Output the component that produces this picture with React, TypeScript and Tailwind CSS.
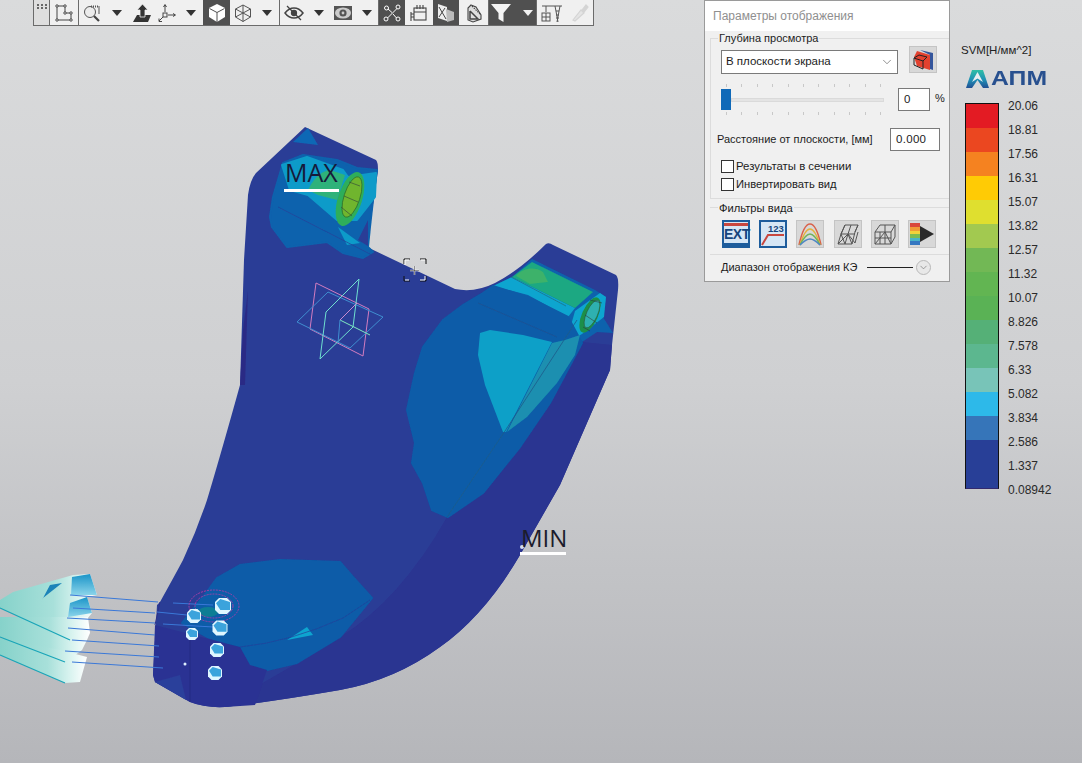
import React from "react";
import { ChevronDown } from "lucide-react";

const bands = [
  "#e31b23",
  "#eb4720",
  "#f58220",
  "#ffcb05",
  "#dfdf2f",
  "#a2c950",
  "#72b855",
  "#62b552",
  "#5ab255",
  "#55b077",
  "#5cb78f",
  "#78c4b8",
  "#2db9e9",
  "#3675b9",
  "#283f97",
  "#283f97",
];

const labels = [
  "20.06",
  "18.81",
  "17.56",
  "16.31",
  "15.07",
  "13.82",
  "12.57",
  "11.32",
  "10.07",
  "8.826",
  "7.578",
  "6.33",
  "5.082",
  "3.834",
  "2.586",
  "1.337",
  "0.08942",
];

const ticks = [0, 1, 2, 3, 4, 5, 6, 7, 8, 9, 10];

function Divider() {
  return <div className="w-px h-[25px] bg-[#6b6b6b] shrink-0" />;
}

function Arrow({ light }: { light?: boolean }) {
  return (
    <svg width="10" height="6" viewBox="0 0 10 6">
      <path d="M0 0H10L5 6Z" fill={light ? "#f2f2f2" : "#333"} />
    </svg>
  );
}

function Tool({ children, dark, w }: { children: React.ReactNode; dark?: boolean; w: number }) {
  return (
    <div
      className={`h-[25px] shrink-0 flex items-center justify-center ${dark ? "bg-[#505050]" : ""}`}
      style={{ width: w }}
    >
      {children}
    </div>
  );
}

function Toolbar() {
  return (
    <div className="absolute left-[33px] top-0 w-[561px] h-[26px] flex bg-[#f0f0f0] border border-t-0 border-[#6b6b6b]">
      <div className="w-[15px] h-[25px] bg-[#dedede] flex flex-col gap-px pt-1 items-center">
        <div className="w-[10px] h-[2px] border-t-2 border-dotted border-[#666]" />
        <div className="w-[10px] h-[2px] border-t-2 border-dotted border-[#666]" />
      </div>
      <Divider />
      <Tool w={28}>
        <svg width="18" height="18" viewBox="0 0 18 18" fill="none" stroke="#444" strokeWidth="1">
          <path d="M2 2H10V9H16V16H2Z" />
          <circle cx="2" cy="2" r="1.2" fill="#fff" />
          <circle cx="10" cy="2" r="1.2" fill="#fff" />
          <circle cx="10" cy="9" r="1.2" fill="#fff" />
          <circle cx="16" cy="9" r="1.2" fill="#fff" />
          <circle cx="16" cy="16" r="1.2" fill="#fff" />
          <circle cx="2" cy="16" r="1.2" fill="#fff" />
        </svg>
      </Tool>
      <Divider />
      <Tool w={26}>
        <svg width="18" height="18" viewBox="0 0 18 18" fill="none" stroke="#555" strokeWidth="1">
          <circle cx="7" cy="8" r="5.5" fill="#ececec" />
          <path d="M11 12L16 17" strokeWidth="2.2" stroke="#444" />
          <path d="M8 2.5H16V10" strokeDasharray="1 1" strokeWidth="2" />
        </svg>
      </Tool>
      <Tool w={24}><Arrow /></Tool>
      <Tool w={26}>
        <svg width="20" height="20" viewBox="0 0 20 20">
          <path d="M5 12H19L16 19H1Z" fill="#333" />
          <path d="M10.5 1L16 7H13V14H8V7H5Z" fill="#333" stroke="#f0f0f0" strokeWidth="0.8" />
        </svg>
      </Tool>
      <Tool w={24}>
        <svg width="20" height="20" viewBox="0 0 20 20" fill="none" stroke="#444" strokeWidth="1">
          <path d="M8 9V2M6.5 4L8 1.5L9.5 4" />
          <path d="M11 12H18M16 10.5L18.5 12L16 13.5" />
          <path d="M6 14L2 18M2 15.5V18.5H5" />
          <rect x="6" y="10" width="4" height="4" />
        </svg>
      </Tool>
      <Tool w={24}><Arrow /></Tool>
      <Tool dark w={27}>
        <svg width="20" height="20" viewBox="0 0 20 20">
          <path d="M10 1L18 5V14L10 19L2 14V5Z" fill="#fff" />
          <path d="M2.5 5.5L10 9.5L17.5 5.5M10 9.5V19" stroke="#505050" fill="none" strokeWidth="1" />
        </svg>
      </Tool>
      <Tool w={25}>
        <svg width="20" height="20" viewBox="0 0 20 20" fill="none" stroke="#555" strokeWidth="1">
          <path d="M10 2L17.5 6V14L10 18.5L2.5 14V6Z" />
          <path d="M2.5 6L10 10L17.5 6M10 10V18.5M2.5 14L10 10L17.5 14M10 2V10" />
        </svg>
      </Tool>
      <Tool w={24}><Arrow /></Tool>
      <Divider />
      <Tool w={27}>
        <svg width="20" height="18" viewBox="0 0 20 18" fill="none" stroke="#444" strokeWidth="1.5">
          <path d="M1 9C4 5 7 4 10 4S16 5 19 9C16 13 13 14 10 14S4 13 1 9Z" />
          <circle cx="10" cy="9" r="2.4" fill="#444" />
          <path d="M3 2L17 16" strokeWidth="1.3" />
        </svg>
      </Tool>
      <Tool w={23}><Arrow /></Tool>
      <Tool w={25}>
        <svg width="20" height="18" viewBox="0 0 20 18">
          <path d="M1 2H19V16H1Z" fill="#555" />
          <ellipse cx="10" cy="9" rx="8" ry="5.5" fill="#ccc" />
          <circle cx="10" cy="9" r="3.6" fill="#555" />
          <circle cx="10" cy="9" r="1.4" fill="#ccc" />
        </svg>
      </Tool>
      <Tool w={23}><Arrow /></Tool>
      <Divider />
      <Tool dark w={26}>
        <svg width="20" height="20" viewBox="0 0 20 20" fill="none" stroke="#fff" strokeWidth="1">
          <path d="M5.5 15L15 5.5" />
          <path d="M6 6L10 9.5M11 11L14.5 15" />
          <circle cx="4.5" cy="5" r="2" />
          <circle cx="16" cy="4" r="2" />
          <circle cx="4" cy="16" r="2" />
          <circle cx="16" cy="16" r="2" />
        </svg>
      </Tool>
      <Tool w={28}>
        <svg width="20" height="20" viewBox="0 0 20 20" fill="none" stroke="#444" strokeWidth="1.1">
          <rect x="5" y="5" width="12" height="12" />
          <path d="M8 2V6M11 2V6M14 2V6M5 9H17" />
          <path d="M2 9V18M2 11H5M2 14H5" />
        </svg>
      </Tool>
      <Tool dark w={26}>
        <svg width="20" height="20" viewBox="0 0 20 20">
          <path d="M2 1L11 4V18L2 15Z" fill="#eee" />
          <path d="M10 6L18 9V17L11 19Z" fill="#bbb" />
          <path d="M3 4L10 16M3 14L9 5" stroke="#444" strokeWidth="1" />
        </svg>
      </Tool>
      <Tool w={29}>
        <svg width="20" height="20" viewBox="0 0 20 20" fill="none" stroke="#444" strokeWidth="1.1">
          <path d="M7 2L12 4L17 12L17 16L9 19L4 17V5Z" fill="#ddd" />
          <path d="M6 8V16H14L6 8" strokeWidth="1.5" />
          <path d="M8 3L16 11" strokeDasharray="1.5 1" />
        </svg>
      </Tool>
      <Divider />
      <Tool dark w={47}>
        <div className="flex items-center gap-[12px] -ml-px">
          <svg width="20" height="18" viewBox="0 0 20 18">
            <path d="M0 0H20L12.5 9V18L7.5 15V9Z" fill="#f4f4f4" />
          </svg>
          <Arrow light />
        </div>
      </Tool>
      <Divider />
      <Tool w={29}>
        <svg width="22" height="20" viewBox="0 0 22 20" fill="none" stroke="#555" strokeWidth="1">
          <path d="M1 3H21M14 3L17 19M19 3L16 19M15 8H18M15 12H18M15 15H18" />
          <path d="M5 3V9" />
          <rect x="1" y="10" width="8" height="8" />
          <path d="M1 14H9M5 10V18" />
        </svg>
      </Tool>
      <Tool w={27}>
        <svg width="20" height="20" viewBox="0 0 20 20" fill="#e4e4e4" stroke="#d4d4d4" strokeWidth="1.2">
          <path d="M3 17L11 7L14 10L5 18Z" />
          <path d="M12 7L16 2L18 4L14 9Z" fill="#d4d4d4" />
        </svg>
      </Tool>
    </div>
  );
}

function Legend() {
  return (
    <div className="absolute left-[960px] top-[43px] w-[122px] text-[#222]">
      <div className="text-[11.5px] leading-[14px] pl-px">SVM[Н/мм^2]</div>
      <div className="flex items-center gap-[2px] h-[18px] mt-[12px] ml-[6px]">
        <svg width="23" height="19" viewBox="0 0 23 19" className="shrink-0">
          <defs>
            <linearGradient id="logoGrad" x1="0" y1="0" x2="0" y2="1">
              <stop offset="0" stopColor="#2fbfa5" />
              <stop offset="0.55" stopColor="#1f8fb5" />
              <stop offset="1" stopColor="#214f93" />
            </linearGradient>
          </defs>
          <path d="M0 19L6 1H17L23 19H17L11.5 11L6 19Z" fill="url(#logoGrad)" />
          <path d="M11.5 3L17 13L11.5 9.5L6 13Z" fill="#e8eef0" />
        </svg>
        <span className="text-[21px] leading-[18px] font-bold text-[#28508f] scale-x-[1.18] origin-left">АПМ</span>
      </div>
      <div className="flex items-start mt-[16px] ml-[5px]">
        <div className="w-[34px] border border-[#111] border-b-[#322a6e] shrink-0">
          {bands.map((color, i) => (
            <div key={i} className="h-[24px]" style={{ background: color }} />
          ))}
        </div>
        <div className="ml-[9px] -mt-[9px] text-[12px] leading-[24px] text-[#2a2a2a]">
          {labels.map((label) => (
            <div key={label}>{label}</div>
          ))}
        </div>
      </div>
    </div>
  );
}

function FilterButton({ children, selected }: { children: React.ReactNode; selected?: boolean }) {
  return (
    <div className={`w-[28px] h-[28px] shrink-0 flex items-center justify-center ${selected ? "border-2 border-[#1d5c9c] bg-[#d6e6f5]" : "border border-[#c4c4c4] bg-[#d8d8d8]"}`}>
      {children}
    </div>
  );
}

function TickRow() {
  return (
    <div className="flex justify-between w-[155px] ml-[5px] h-[3px]">
      {ticks.map((t) => <div key={t} className="w-px h-[3px] bg-[#c8c8c8]" />)}
    </div>
  );
}

function Panel() {
  return (
    <div className="absolute left-[704px] top-0 w-[246px] h-[282px] bg-[#f0f0f0] border border-[#9a9a9a] text-[11px] text-[#1c1c1c]">
      <div className="h-[30px] bg-white pl-2 flex items-center text-[12px] text-[#8f8f8f]">Параметры отображения</div>

      <div className="relative ml-[5px] mt-[7px] h-[161px] border border-r-0 border-[#dcdcdc]">
        <span className="absolute left-[7px] -top-[8px] bg-[#f0f0f0] px-px leading-[14px]">Глубина просмотра</span>

        <div className="flex items-start mt-[11px] ml-[10px]">
          <div className="w-[177px] h-[24px] bg-white border border-[#7a7a7a] flex items-center justify-between pl-[4px] pr-[3px] text-[11.5px] shrink-0">
            <span>В плоскости экрана</span>
            <ChevronDown size={14} strokeWidth={1} color="#444" />
          </div>
          <div className="w-[28px] h-[27px] -mt-[4px] ml-[11px] bg-[#d8d8d8] border border-[#c4c4c4] flex items-center justify-center shrink-0">
            <svg width="22" height="22" viewBox="0 0 22 22">
              <path d="M8 1L21 4V21L18 20V6Z" fill="#34559c" />
              <path d="M5 2L18 6V21L5 17L2 8Z" fill="#e2412f" />
              <path d="M2 9L11 12V20L2 16ZM2 9L7 6L15 8L11 12" fill="none" stroke="#222" strokeWidth="1" />
            </svg>
          </div>
        </div>

        <div className="flex mt-[10px] ml-[10px]">
          <div className="relative w-[164px] h-[31px] shrink-0">
            <TickRow />
            <div className="h-[4px] ml-[10px] mt-[11px] w-[153px] bg-[#e4e4e4] border border-[#dadada]" />
            <div className="mt-[10px]"><TickRow /></div>
            <div className="absolute left-0 top-[5px] w-[10px] h-[21px] bg-[#0f69b8]" />
          </div>
          <div className="ml-[13px] w-[32px] h-[23px] mt-[4px] bg-white border border-[#7a7a7a] flex items-center pl-[5px] text-[11.5px] shrink-0">0</div>
          <span className="ml-[5px] mt-[7px] leading-[14px]">%</span>
        </div>

        <div className="flex items-center justify-between mt-[13px] ml-[6px] mr-[9px]">
          <span>Расстояние от плоскости, [мм]</span>
          <div className="w-[50px] h-[23px] bg-white border border-[#7a7a7a] flex items-center pl-[5px] text-[11.5px] tracking-[0.3px]">0.000</div>
        </div>

        <label className="flex items-center mt-[9px] ml-[10px] h-[13px] text-[11.4px]">
          <span className="w-[13px] h-[13px] bg-white border border-[#333] mr-[2px]" />
          Результаты в сечении
        </label>
        <label className="flex items-center mt-[5px] ml-[10px] h-[13px] text-[11.2px]">
          <span className="w-[13px] h-[13px] bg-white border border-[#333] mr-[2px]" />
          Инвертировать вид
        </label>
      </div>

      <div className="relative ml-[5px] mt-[8px] h-[48px] border-t border-b border-[#dcdcdc]">
        <span className="absolute left-[8px] -top-[7px] bg-[#f0f0f0] px-px leading-[14px] text-[11.2px]">Фильтры вида</span>
        <div className="flex gap-[9.2px] pl-[12px] pt-[12px]">
          <FilterButton selected>
            <div className="w-full h-full flex flex-col">
              <div className="h-[4px] mt-[1px] bg-[#c8473f]" />
              <div className="flex-1 text-center text-[14px] leading-[17px] font-bold text-[#16457d] tracking-[-0.5px]">EXT</div>
              <div className="h-[3px] bg-[#1d5c9c]" />
            </div>
          </FilterButton>
          <FilterButton selected>
            <svg width="24" height="24" viewBox="0 0 24 24" fill="none">
              <text x="7" y="10" fontSize="9.5" fontWeight="700" fontFamily="Liberation Sans" fill="#16457d">123</text>
              <path d="M1 23L7 13H23" stroke="#c8473f" strokeWidth="2" />
            </svg>
          </FilterButton>
          <FilterButton>
            <svg width="24" height="24" viewBox="0 0 24 24" fill="none" strokeWidth="1.5">
              <path d="M1 23C5 5 9 2 12 2S19 5 23 23" stroke="#d9614a" />
              <path d="M2 23C6 10 9 7 12 7S18 10 22 23" stroke="#e6b13f" />
              <path d="M2 23C6 15 9 12 12 12S18 15 22 23" stroke="#6fb35e" />
              <path d="M2 23C6 19 9 17 12 17S18 19 22 23" stroke="#4f86c4" />
            </svg>
          </FilterButton>
          <FilterButton>
            <svg width="24" height="24" viewBox="0 0 24 24" fill="none" stroke="#555" strokeWidth="1">
              <path d="M9 3H22L19 10L16 22H2L5 12ZM5 12H19M9 3L5 12M15 3L12 12L9 22M2 22L12 12L16 22M19 10L22 3M5 12L9 22M12 12L19 21L22 10" />
            </svg>
          </FilterButton>
          <FilterButton>
            <svg width="24" height="24" viewBox="0 0 24 24" fill="none" stroke="#555" strokeWidth="1">
              <path d="M7 3H22V15L18 22H2V10ZM2 10H18V22M18 10L22 3M7 10V22M12 10V22M2 16H18M2 22L12 10L18 22M12 3V10" />
            </svg>
          </FilterButton>
          <FilterButton>
            <svg width="26" height="24" viewBox="0 0 26 24">
              <rect x="1" y="1" width="10" height="4" fill="#d9483b" />
              <rect x="1" y="5" width="10" height="4" fill="#f09a36" />
              <rect x="1" y="9" width="10" height="3" fill="#f2d23a" />
              <rect x="1" y="12" width="10" height="4" fill="#7dbb52" />
              <rect x="1" y="16" width="10" height="3" fill="#49b4c8" />
              <rect x="1" y="19" width="10" height="4" fill="#3577c1" />
              <path d="M11 4L25 12L11 20Z" fill="#2a2a2a" />
            </svg>
          </FilterButton>
        </div>
      </div>

      <div className="flex items-center ml-4 h-[24px]">
        <span>Диапазон отображения КЭ</span>
        <div className="w-[46px] h-px bg-[#222] ml-[10px]" />
        <div className="w-[15px] h-[15px] ml-[3px] rounded-full border border-[#b8b8b8] bg-[#e8e8e8] flex items-center justify-center">
          <ChevronDown size={11} strokeWidth={1.5} color="#777" />
        </div>
      </div>
    </div>
  );
}

const bolts = [
  [223, 606, 8],
  [194, 616, 7],
  [220, 628, 7.5],
  [192, 634, 6],
  [217, 650, 7],
  [215, 673, 7],
];

const rods = [
  [70, 595, 158, 602],
  [73, 608, 155, 613],
  [67, 618, 155, 623],
  [68, 628, 155, 635],
  [72, 640, 159, 646],
  [65, 651, 159, 657],
  [72, 662, 163, 668],
  [173, 603, 213, 605],
  [157, 612, 187, 615],
  [163, 624, 213, 627],
];

function Part() {
  const body =
    "M305 127 L376 160 Q378 162 378 170 L373 205 L367 247 L455 289 Q475 293 495 283 Q520 270 546 244 Q549 242 553 245 L616 275 Q619 278 618 290 L612 345 L610 370 L560 485 L520 555 Q485 615 440 647 Q395 680 340 690 Q270 702 225 707 Q205 708 190 702 L155 682 L153 675 L157 605 L160 602 Q175 575 183 560 Q197 530 207 500 Q222 450 240 385 L244 260 L248 195 Q250 180 256 173 Z";
  return (
    <svg className="absolute inset-0" width="1082" height="763" viewBox="0 0 1082 763">
      <defs>
        <linearGradient id="cone" x1="0" y1="0" x2="1" y2="0">
          <stop offset="0" stopColor="#86d2ca" />
          <stop offset="0.55" stopColor="#a8e0da" />
          <stop offset="0.8" stopColor="#d8f3ef" />
          <stop offset="1" stopColor="#ffffff" />
        </linearGradient>
        <linearGradient id="capBlue" x1="0" y1="0" x2="0" y2="1">
          <stop offset="0" stopColor="#1a94c8" />
          <stop offset="1" stopColor="#8ad4ea" />
        </linearGradient>
        <filter id="soft" x="-5%" y="-5%" width="110%" height="110%">
          <feGaussianBlur stdDeviation="0.6" />
        </filter>
      </defs>

      <g filter="url(#soft)">
        <path d={body} fill="#2a3d96" />
        <path d="M240 385 L243 330 L248 290 L245 385 Z" fill="#2c2a85" />
        <path
          d="M612 345 L582 342 L505 431 L447 517 Q400 600 340 637 Q300 662 250 690 L225 707 Q270 702 340 690 Q395 680 440 647 Q485 615 520 555 L560 485 L610 370Z"
          fill="#2c3491"
        />

        {/* top lug */}
        <path d="M293 142 L308 128 L318 145 Z" fill="#1067b5" />
        <path d="M270 217 L273 197 L283 163 L303 155 L337 160 L357 168 L377 170 L373 200 L370 227 L368 247 L373 252 L363 258 L343 253 L327 242 L287 247 L272 227Z" fill="#0e62ad" stroke="#0e62ad" strokeWidth="2" strokeLinejoin="round" />
        <path d="M282 165 L307 157 L343 170 L348 177 L376 173 L375 197 L357 220 L337 220 L308 195 L290 190 Z" fill="#0e9bc9" stroke="#0e9bc9" strokeWidth="2" strokeLinejoin="round" />
        <path d="M338 227 L360 243 L347 245 Z" fill="#0e9bc9" />
        <path d="M368 220 L358 240 L368 246Z" fill="#2a3d96" />
        <path d="M308 190 L318 195 L337 200 L345 175 L330 170 C318 172 312 182 308 190Z" fill="#2fb27a" />
        <ellipse cx="350" cy="199" rx="12" ry="28" transform="rotate(18 350 199)" fill="#2fae5a" />
        <ellipse cx="352" cy="197" rx="8" ry="21" transform="rotate(18 352 197)" fill="#6fb52e" stroke="#2a6a2a" strokeWidth="0.7" />
        <path d="M349 182L360 186M344 196L358 202M341 207L352 216" stroke="#38503a" strokeWidth="0.7" />
        <path d="M278 207 L372 255" stroke="#24409a" strokeWidth="0.7" />

        {/* right lug */}
        <path d="M532 259 L595 290 L606 297 L603 317 L613 333 L597 332 L582 342 L568 320 L528 297 L493 286 L512 277Z" fill="#0e62ad" />
        <path d="M493 286 L512 277 L575 308 L568 317 L528 295Z" fill="#0ea5cf" />
        <path d="M512 277 L532 262 L593 292 L575 308Z" fill="#1aa882" />
        <path d="M516 276 C522 268 535 266 543 272 L548 282 L530 284Z" fill="#3cb26a" />
        <path d="M511 277 L566 306" stroke="#1e6a80" strokeWidth="0.7" />
        <path d="M566 343 L575 311 L600 293 L606 297 L604 317 L582 334Z" fill="#0ea5cf" />
        <ellipse cx="590" cy="315" rx="8" ry="19" transform="rotate(24 590 315)" fill="#1b8f4a" />
        <ellipse cx="592" cy="314" rx="5.5" ry="15" transform="rotate(24 592 314)" fill="#2fb0b0" stroke="#2a5a3a" strokeWidth="0.6" />
        <path d="M590 300L602 303M585 315L597 323M583 327L590 331" stroke="#2b3a3a" strokeWidth="0.6" />

        {/* blue face zones */}
        <path d="M483 293 L463 305 L443 320 L423 347 L415 373 L407 410 L415 443 L412 463 L423 483 L432 510 L448 517 L483 493 L520 447 L550 403 L582 343 L568 317 L528 297 L493 286Z" fill="#0b5ca8" stroke="#0b5ca8" strokeWidth="2" strokeLinejoin="round" />
        <path d="M480 333 L490 330 L523 335 L552 342 L506 432 L503 432 L485 385 L478 355Z" fill="#0ea0c8" />
        <path d="M552 343 L565 340 L580 335 L575 355 L557 383 L527 417 L507 432Z" fill="#1b8fb0" />
        <path d="M478 303 L557 337" stroke="#234f8f" strokeWidth="0.7" />
        <path d="M577 320 L505 431 L447 517" stroke="#1f5a8a" strokeWidth="0.8" fill="none" />

        {/* bottom zone */}
        <path d="M182 623 L203 597 L217 578 L240 565 L280 560 L340 562 L353 577 L372 598 L340 637 L297 663 L267 670 L250 665 L240 647 L207 637Z" fill="#0b5ca8" stroke="#0b5ca8" strokeWidth="2" strokeLinejoin="round" />
        <path d="M287 640 L307 627 L313 635Z" fill="#0ea5cf" />
        <path d="M240 647 Q290 642 343 618 L370 600" stroke="#24409a" strokeWidth="0.7" fill="none" />
        <path d="M155 625 L240 647 L250 665 L267 670 L255 705 L225 707 Q205 708 190 702 L155 682 L153 675Z" fill="#2a3393" />
        <path d="M155 682 L180 675 L186 700Z" fill="#2b3f9b" />
        <path d="M160 602 L155 625" stroke="#2a2f8a" strokeWidth="1" />
        <path d="M190 632 L190 702" stroke="#222a80" strokeWidth="0.7" />
        <ellipse cx="208" cy="612" rx="10" ry="5" fill="#0d7d94" />

        {/* datum planes */}
        <g fill="none" strokeWidth="1">
          <path d="M316 283 L369 309 L363 356 L310 329Z" stroke="#d27cc0" />
          <path d="M297 322 L328 292 L383 317 L350 348Z" stroke="#3f8ed0" />
          <path d="M359 279 L353 327 L320 359 L326 312Z" stroke="#6fe0d0" />
          <path d="M340 320 L370 335" stroke="#7fe8c0" />
          <path d="M340 320 L357 303" stroke="#c88ad0" />
          <path d="M340 320 L338 343" stroke="#3f8ed0" />
        </g>

        {/* cones */}
        <path d="M0 600 L13 592 L73 575 L90 574 L97 595 L87 597 L92 613 L70 640 L0 608Z" fill="url(#cone)" />
        <path d="M0 617 L67 617 L88 617 L90 633 L87 640 L82 650 L67 661 L0 637Z" fill="url(#cone)" />
        <path d="M0 638 L60 650 L87 657 L80 682 L65 683 L0 655Z" fill="url(#cone)" />
        <path d="M72 577 L90 574 L97 595 L71 595Z" fill="url(#capBlue)" />
        <path d="M70 603 L87 597 L92 613 L68 617Z" fill="url(#capBlue)" />
        <path d="M43 598 L62 583 L50 585 L42 600Z" fill="#1a83b8" />
        <path d="M0 608 L70 640M0 637 L65 662M0 655 L65 683" stroke="#1aa5b8" strokeWidth="1.3" fill="none" />

        {rods.map(([x1, y1, x2, y2]) => (
          <path key={`${x1}-${y1}`} d={`M${x1} ${y1}L${x2} ${y2}`} stroke="#3a78d8" strokeWidth="1" />
        ))}

        {/* bolt rings and bolts */}
        <g fill="none" stroke="#b03ea8" strokeWidth="0.9" strokeDasharray="2 1">
          <ellipse cx="214" cy="606" rx="25" ry="16" />
          <ellipse cx="214" cy="606" rx="19" ry="12" />
        </g>
        {bolts.map(([x, y, r]) => (
          <g key={`${x}-${y}`}>
            <path d={`M${x - r} ${y - r / 2} L${x - r / 2} ${y - r} L${x + r / 2} ${y - r} L${x + r} ${y - r / 2} L${x + r} ${y + r / 2} L${x + r / 2} ${y + r} L${x - r / 2} ${y + r} L${x - r} ${y + r / 2}Z`} fill="#dff6ff" />
            <path d={`M${x - r + 1} ${y - r / 3} L${x - r / 3} ${y - r + 1} L${x + r - 1} ${y - r / 2} L${x + r - 1} ${y + r / 2} L${x - r / 3} ${y + r / 2}Z`} fill="#3aa3dc" />
          </g>
        ))}
        <circle cx="185" cy="664" r="1.5" fill="#dfefff" />
      </g>

      {/* MAX / MIN markers */}
      <rect x="284" y="189" width="55" height="3" fill="#fff" />
      <rect x="520" y="552" width="46" height="3" fill="#fff" />
      <circle cx="522" cy="547" r="2" fill="#d8e0f0" />

      {/* cursor */}
      <path d="M404 264V259H410M420 259H426V264M404 276V281H410M420 281H426V276" fill="none" stroke="#111" strokeWidth="1" />
      <path d="M405 265V260H409M421 260H425M425 276V280H420M409 280H405" fill="none" stroke="#fff" strokeWidth="1" />
      <path d="M410 270.5H419M414.5 266V275" stroke="#fff" strokeWidth="1.4" />
      <path d="M410 270.5H419M414.5 266V275" stroke="#222" strokeWidth="0.5" />
    </svg>
  );
}

export default function App() {
  return (
    <div className="relative w-[1082px] h-[763px] overflow-hidden bg-gradient-to-b from-[#dadbdc] via-[#cfd0d2] to-[#b5b6ba] font-['Liberation_Sans',sans-serif]">
      <Part />
      <span className="absolute left-[285px] top-[158px] text-[25px] leading-[28px] text-[#161a3a] font-['Open_Sans',sans-serif]">MAX</span>
      <span className="absolute left-[521px] top-[524px] text-[24px] leading-[28px] text-[#1c1c2c] font-['Open_Sans',sans-serif]">MIN</span>
      <Toolbar />
      <Panel />
      <Legend />
    </div>
  );
}
